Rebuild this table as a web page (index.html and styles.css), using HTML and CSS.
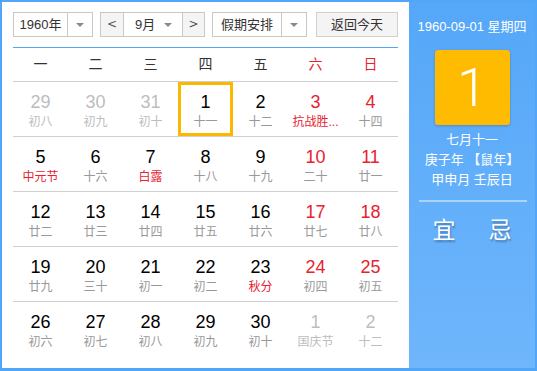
FILE: index.html
```html
<!DOCTYPE html>
<html lang="zh-CN">
<head>
<meta charset="utf-8">
<title>万年历</title>
<link rel="stylesheet" href="styles.css">
</head>
<body>
<div class="cal">
  <div class="main">
    <div class="toolbar">
      <div class="sel sel-year"><span class="sel-text">1960年</span><span class="sel-arrow"><i class="tri"></i></span></div>
      <div class="month-group">
        <span class="nav">&lt;</span>
        <span class="month-sel"><span class="month-text">9月</span><i class="tri"></i></span>
        <span class="nav nav-next">&gt;</span>
      </div>
      <div class="sel sel-holiday"><span class="sel-text">假期安排</span><span class="sel-arrow"><i class="tri"></i></span></div>
      <div class="btn-today">返回今天</div>
    </div>
    <div class="grid">
      <div class="week">
        <span>一</span><span>二</span><span>三</span><span>四</span><span>五</span><span class="red">六</span><span class="red">日</span>
      </div>
      <div class="row">
        <div class="day other"><b>29</b><s>初八</s></div>
        <div class="day other"><b>30</b><s>初九</s></div>
        <div class="day other"><b>31</b><s>初十</s></div>
        <div class="day sel-day"><b>1</b><s>十一</s></div>
        <div class="day"><b>2</b><s>十二</s></div>
        <div class="day we fest"><b>3</b><s>抗战胜...</s></div>
        <div class="day we"><b>4</b><s>十四</s></div>
      </div>
      <div class="row">
        <div class="day fest"><b>5</b><s>中元节</s></div>
        <div class="day"><b>6</b><s>十六</s></div>
        <div class="day fest"><b>7</b><s>白露</s></div>
        <div class="day"><b>8</b><s>十八</s></div>
        <div class="day"><b>9</b><s>十九</s></div>
        <div class="day we"><b>10</b><s>二十</s></div>
        <div class="day we"><b>11</b><s>廿一</s></div>
      </div>
      <div class="row">
        <div class="day"><b>12</b><s>廿二</s></div>
        <div class="day"><b>13</b><s>廿三</s></div>
        <div class="day"><b>14</b><s>廿四</s></div>
        <div class="day"><b>15</b><s>廿五</s></div>
        <div class="day"><b>16</b><s>廿六</s></div>
        <div class="day we"><b>17</b><s>廿七</s></div>
        <div class="day we"><b>18</b><s>廿八</s></div>
      </div>
      <div class="row">
        <div class="day"><b>19</b><s>廿九</s></div>
        <div class="day"><b>20</b><s>三十</s></div>
        <div class="day"><b>21</b><s>初一</s></div>
        <div class="day"><b>22</b><s>初二</s></div>
        <div class="day fest"><b>23</b><s>秋分</s></div>
        <div class="day we"><b>24</b><s>初四</s></div>
        <div class="day we"><b>25</b><s>初五</s></div>
      </div>
      <div class="row last">
        <div class="day"><b>26</b><s>初六</s></div>
        <div class="day"><b>27</b><s>初七</s></div>
        <div class="day"><b>28</b><s>初八</s></div>
        <div class="day"><b>29</b><s>初九</s></div>
        <div class="day"><b>30</b><s>初十</s></div>
        <div class="day other"><b>1</b><s>国庆节</s></div>
        <div class="day other"><b>2</b><s>十二</s></div>
      </div>
    </div>
  </div>
  <div class="side">
    <div class="side-date">1960-09-01 星期四</div>
    <div class="big-day">1</div>
    <div class="lunar">七月十一</div>
    <div class="lunar">庚子年 【鼠年】</div>
    <div class="lunar">甲申月 壬辰日</div>
    <div class="side-line"></div>
    <div class="yiji"><span>宜</span><span>忌</span></div>
  </div>
</div>
</body>
</html>
```

FILE: styles.css
```css
* { box-sizing: border-box; }
html, body { margin: 0; padding: 0; background: #fff; }
body {
  font-family: "Liberation Sans", "Noto Sans CJK SC", sans-serif;
  color: #333;
}
.cal {
  width: 537px;
  height: 371px;
  border: 2px solid #52a6f7;
  border-bottom-width: 3px;
  display: flex;
  background: #fff;
}
.main {
  width: 407px;
  padding: 10px 11px 0 11px;
}
.toolbar {
  display: flex;
  height: 25px;
  font-size: 13px;
  line-height: 23px;
}
.sel {
  display: flex;
  border: 1px solid #c8c8c8;
  background: #fff;
}
.sel-year { width: 80px; }
.sel-holiday { width: 95px; margin-left: 7px; }
.sel-text { flex: 1; text-align: center; }
.sel-arrow {
  width: 25px;
  border-left: 1px solid #c8c8c8;
  display: flex;
  align-items: center;
  justify-content: center;
}
.tri {
  display: block;
  width: 0;
  height: 0;
  border-left: 4px solid transparent;
  border-right: 4px solid transparent;
  border-top: 4px solid #8a8a8a;
}
.month-group {
  display: flex;
  width: 105px;
  margin-left: 7px;
  border: 1px solid #c8c8c8;
}
.nav {
  width: 22px;
  background: #f4f4f4;
  text-align: center;
  color: #555;
  font-size: 14px;
  font-family: "DejaVu Sans", sans-serif;
  font-size: 12px;
}
.nav-next { border-left: 1px solid #c8c8c8; }
.month-sel {
  flex: 1;
  display: flex;
  align-items: center;
  border-left: 1px solid #c8c8c8;
  background: #fff;
  padding: 0 10px 0 11px;
}
.month-text { flex: 1; }
.btn-today {
  width: 82px;
  margin-left: 9px;
  border: 1px solid #d0d0d0;
  background: #f4f4f4;
  text-align: center;
}
.grid {
  margin-top: 10px;
  border-top: 1px solid #52a6f7;
}
.week {
  display: grid;
  grid-template-columns: repeat(7, 55px);
  height: 34px;
  border-bottom: 1px solid #cfcfcf;
  font-size: 14px;
  line-height: 33px;
  text-align: center;
  color: #333;
}
.week .red { color: #e8212f; }
.row {
  display: grid;
  grid-template-columns: repeat(7, 55px);
  height: 55px;
  border-bottom: 1px solid #cfcfcf;
}
.row.last { border-bottom: 0; }
.day {
  display: flex;
  flex-direction: column;
  align-items: center;
  padding-top: 9px;
}
.day b {
  font-weight: normal;
  font-size: 18px;
  line-height: 22px;
  color: #000;
}
.day s {
  text-decoration: none;
  font-size: 12px;
  line-height: 18px;
  color: #999;
}
.day.we b { color: #e8212f; }
.day.fest s { color: #e8212f; }
.day.other b, .day.other s { color: #bdbdbd; }
.sel-day {
  box-shadow: inset 0 0 0 3px #fbb800;
  height: 54px;
}
.side {
  flex: 1;
  background: linear-gradient(#55a7f8, #6fb6fc);
  color: #fff;
  display: flex;
  flex-direction: column;
  align-items: center;
  text-align: center;
}
.side-date {
  margin-top: 16px;
  font-size: 13px;
  line-height: 18px;
}
.big-day {
  margin-top: 14px;
  width: 75px;
  height: 75px;
  background: #ffbb00;
  border-radius: 3px;
  box-shadow: 0 1px 3px rgba(0, 0, 0, 0.2);
  font-family: "Roboto", "Liberation Sans", sans-serif;
  font-weight: 300;
  font-size: 54px;
  line-height: 75px;
}
.lunar {
  font-size: 13px;
  line-height: 20px;
}
.big-day + .lunar { margin-top: 5px; }
.side-line {
  align-self: stretch;
  margin: 10px 8px 0 10px;
  height: 2px;
  background: rgba(255, 255, 255, 0.45);
}
.yiji {
  margin-top: 13px;
  display: flex;
  gap: 33px;
  font-size: 23px;
  line-height: 30px;
  text-shadow: 1px 2px 2px rgba(0, 0, 0, 0.3);
}
```
